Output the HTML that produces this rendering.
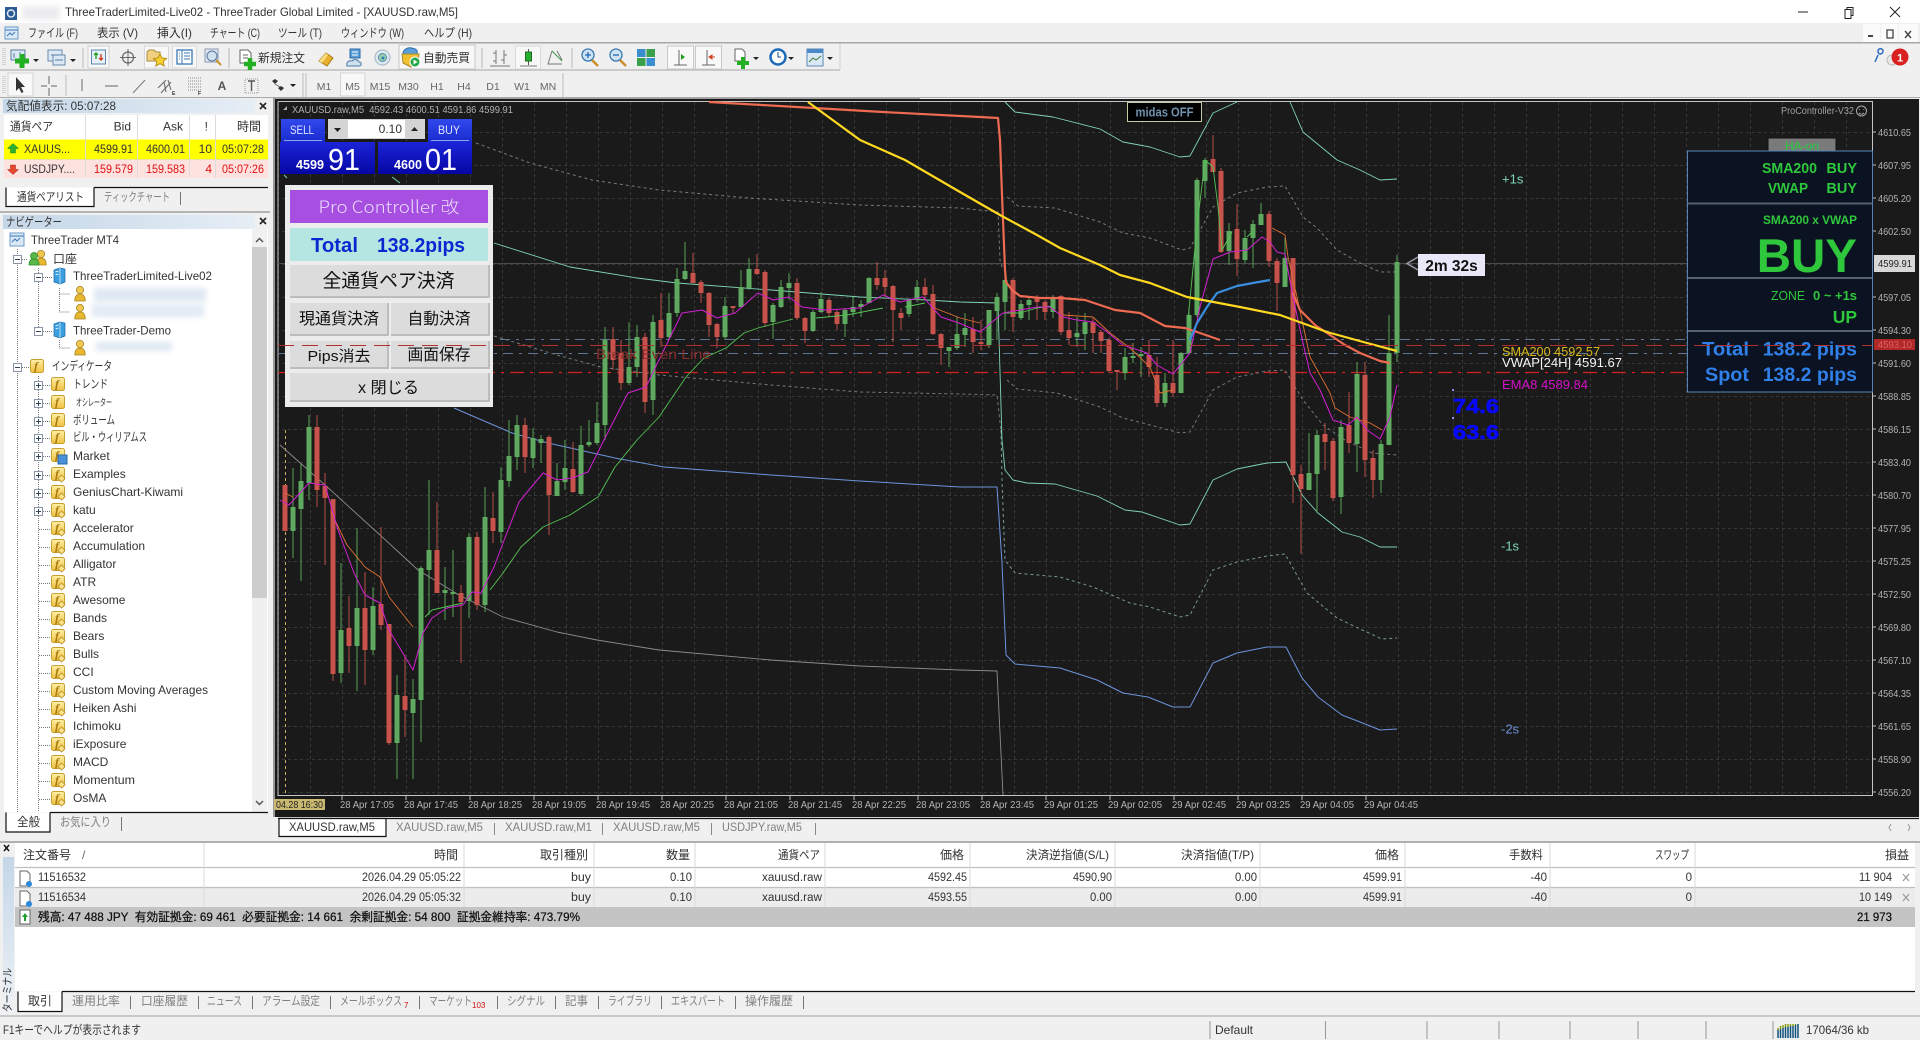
<!DOCTYPE html>
<html lang="ja"><head><meta charset="utf-8"><title>MT4</title>
<style>
html,body{margin:0;padding:0;background:#f0f0f0;overflow:hidden;width:1920px;height:1040px}
svg{display:block}
text{font-family:"Liberation Sans","Noto Sans CJK JP",sans-serif;font-size:12px;fill:#333;white-space:pre}
.e{text-anchor:end}.m{text-anchor:middle}
.g{fill:#808080}
.p text,.p{font-size:10.5px;fill:#b4b4b4}
.b{font-weight:700}
.gr{fill:#2fc73c;font-weight:700}
.f{font-family:"Liberation Serif",serif;font-style:italic;font-weight:700;font-size:12px;fill:#a87a10}
.btn{font-size:16px;fill:#111;text-anchor:middle}
</style></head><body>
<svg xmlns="http://www.w3.org/2000/svg" width="1920" height="1040" viewBox="0 0 1920 1040">
<defs>
<linearGradient id="hd" x1="0" x2="1"><stop offset="0" stop-color="#c4d6e8"/><stop offset="1" stop-color="#e6eef5"/></linearGradient>
<linearGradient id="bs" x1="0" x2="0" y1="0" y2="1"><stop offset="0" stop-color="#3048ec"/><stop offset="1" stop-color="#1a2cd0"/></linearGradient>
<linearGradient id="bp" x1="0" x2="0" y1="0" y2="1"><stop offset="0" stop-color="#1c24d8"/><stop offset="1" stop-color="#0606a4"/></linearGradient>
<linearGradient id="tb" x1="0" x2="0" y1="0" y2="1"><stop offset="0" stop-color="#c4d6e8"/><stop offset="1" stop-color="#eef2f6"/></linearGradient>
<linearGradient id="gold" x1="0" x2="0" y1="0" y2="1"><stop offset="0" stop-color="#fff0a8"/><stop offset="1" stop-color="#f0c040"/></linearGradient>
<pattern id="gv" x="310" y="0" width="32" height="6" patternUnits="userSpaceOnUse"><rect width="1" height="3" fill="#383838"/></pattern>
<pattern id="gh" x="0" y="132" width="6" height="33" patternUnits="userSpaceOnUse"><rect width="3" height="1" fill="#383838"/></pattern>
<filter id="bl" x="-20%" y="-60%" width="140%" height="220%"><feGaussianBlur stdDeviation="3"/></filter>
<g id="fi"><rect x=".5" y=".5" width="13" height="13" rx="2" fill="url(#gold)" stroke="#c8a030"/></g>
<g id="fd"><rect x=".5" y=".5" width="13" height="13" rx="2" fill="url(#gold)" stroke="#c8a030"/><path d="M10.5 8l3.5 3.5-3.5 3.5-3.5-3.500z" fill="#fbe38a" stroke="#b88a20" stroke-width=".8"/></g>
<g id="pm"><rect x=".5" y=".5" width="8" height="8" fill="#fff" stroke="#8a94a8"/><path d="M2 4.5h5" stroke="#345"/></g>
<g id="pp"><rect x=".5" y=".5" width="8" height="8" fill="#fff" stroke="#8a94a8"/><path d="M2 4.5h5M4.5 2v5" stroke="#345"/></g>
<g id="pe"><circle cx="6" cy="4" r="3.6" fill="#f0c850" stroke="#a88420" stroke-width=".8"/><path d="M.8 15c0-5 2-7 5.2-7s5.2 2 5.2 7z" fill="#e8b830" stroke="#a88420" stroke-width=".8"/></g>
<g id="sv"><path d="M1 2l6-2 5 1v13l-5 2-6-2z" fill="#3a9ee0" stroke="#1c6aa8" stroke-width=".7"/><path d="M7 0v16" stroke="#bde" stroke-width="1"/><path d="M2.500 4l3-1M2.500 7l3-1" stroke="#fff" stroke-width=".8"/></g>
</defs>

<rect width="1920" height="1040" fill="#f0f0f0"/>
<rect width="1920" height="23" fill="#fff"/>
<rect x="22" y="6" width="38" height="14" fill="#ececf0" filter="url(#bl)"/>
<rect x="5" y="7" width="12" height="13" fill="#2c5a94"/><circle cx="11" cy="13.500" r="3.500" fill="none" stroke="#dfe8f2" stroke-width="1.500"/>
<text x="65" y="16" textLength="393" lengthAdjust="spacingAndGlyphs">ThreeTraderLimited-Live02 - ThreeTrader Global Limited - [XAUUSD.raw,M5]</text>
<path d="M1798 12h10" stroke="#222" stroke-width="1"/>
<path d="M1845 9.500h6v9h-6zM1847 9.500v-2h6v8h-2" fill="none" stroke="#222"/>
<path d="M1890 7l10 10M1900 7l-10 10" stroke="#222" stroke-width="1"/>

<!-- menu -->
<rect x="5" y="27" width="13" height="12" fill="#dbe8f5" stroke="#6a9ac8"/><path d="M5 30h13M7 36l3-3 2 2 3-3" fill="none" stroke="#3a78b8"/>
<g font-size="12">
<text x="28" y="37" textLength="50" lengthAdjust="spacingAndGlyphs">ファイル (F)</text>
<text x="97" y="37" textLength="41" lengthAdjust="spacingAndGlyphs">表示 (V)</text>
<text x="157" y="37" textLength="35" lengthAdjust="spacingAndGlyphs">挿入(I)</text>
<text x="210" y="37" textLength="50" lengthAdjust="spacingAndGlyphs">チャート (C)</text>
<text x="278" y="37" textLength="44" lengthAdjust="spacingAndGlyphs">ツール (T)</text>
<text x="341" y="37" textLength="63" lengthAdjust="spacingAndGlyphs">ウィンドウ (W)</text>
<text x="424" y="37" textLength="48" lengthAdjust="spacingAndGlyphs">ヘルプ (H)</text>
</g>
<rect x="1863" y="24" width="17" height="19" fill="#fbfbfb"/><rect x="1881" y="24" width="17" height="19" fill="#fbfbfb"/><rect x="1899" y="24" width="19" height="19" fill="#fbfbfb"/>
<path d="M1868 36h5" stroke="#444" stroke-width="2"/><path d="M1887 30h6v8h-6z" fill="none" stroke="#444" stroke-width="1.300"/><path d="M1905 31l6 7M1911 31l-6 7" stroke="#444" stroke-width="1.400"/>
<rect y="42" width="1920" height="1.500" fill="#a8a8a8"/>
<path d="M0 70H840" stroke="#bdbdbd" stroke-width="1.500"/><path d="M840 44V70" stroke="#cfcfcf"/>

<!-- toolbar row 1 -->
<g fill="none" stroke-width="1">
<path d="M3 48v18M5 48v18M3 76v18M5 76v18" stroke="#c0c0c0" stroke-dasharray="1 1" stroke-width="1.200"/>
<rect x="11" y="50" width="14" height="10" fill="#dbe9f6" stroke="#5a7a9a"/><path d="M14 53v5M20 52v5" stroke="#5a7a9a"/>
<path d="M22 54v14M15 61h14" stroke="#22b022" stroke-width="5"/>
<path d="M33 59h6l-3 3z" fill="#222"/>
<rect x="48" y="50" width="14" height="11" fill="#dbe9f6" stroke="#6a8aaa"/><rect x="53" y="55" width="12" height="10" fill="#dbe9f6" stroke="#6a8aaa"/><path d="M51 55h8M55 60h8" stroke="#5a7a9a"/>
<path d="M70 59h6l-3 3z" fill="#222"/>
<path d="M83 48v20" stroke="#b8b8b8"/>
<rect x="88" y="46" width="21" height="22" fill="#f8f8f8" stroke="#d0d0d0"/><rect x="91.500" y="50" width="14" height="14" fill="#e8f0f8" stroke="#5a86b0"/><path d="M96 53v6M94 55l2-2 2 2" stroke="#22a022" stroke-width="1.400"/><path d="M101 54v6M99 58l2 2 2-2" stroke="#d04020" stroke-width="1.400"/>
<circle cx="128" cy="57.500" r="5.500" stroke="#666" stroke-width="1.200"/><path d="M128 49v17M120 57.500h16" stroke="#666"/>
<rect x="144.500" y="46" width="24" height="22" fill="#f8f8f8" stroke="#d8d8d8"/><path d="M147 52l2-2h5l2 2h4v9h-13z" fill="#f2d080" stroke="#a88a40"/><path d="M160 54l2 4 4.500.5-3.300 3 1 4.500-4.200-2.300-4.200 2.300 1-4.500-3.300-3 4.500-.5z" fill="#f8d030" stroke="#b89018"/>
<rect x="172.500" y="46" width="24" height="22" fill="#f8f8f8" stroke="#d8d8d8"/><rect x="177" y="50" width="15" height="14" fill="#fff" stroke="#3a78b8" stroke-width="1.300"/><path d="M182 50v14" stroke="#3a78b8"/><path d="M179 53h1M179 56h1M179 59h1M184 53h6M184 56h6M184 59h6" stroke="#3a78b8"/>
<rect x="205" y="49" width="13" height="13" fill="#e0e8f2" stroke="#8a9ab0"/><circle cx="212" cy="56" r="5" fill="#cfe0ef" stroke="#5a78a0"/><path d="M216 60l5 5" stroke="#c8902c" stroke-width="2"/>
<path d="M229 48v20" stroke="#b8b8b8"/>
<path d="M240 50h8l3 3v10h-11z" fill="#fff" stroke="#666"/><path d="M243 55h5M243 58h5" stroke="#666"/><path d="M250 58v12M244 64h12" stroke="#22b022" stroke-width="4.500"/>
<path d="M319 61l7-8 7 5-6 8z" fill="#e8b030" stroke="#a87a10"/><path d="M319 61l7-8 2 2-6 8z" fill="#f8dc80"/>
<path d="M350 49h10v9h-10z" fill="#5a9fd8" stroke="#2c6aa8"/><path d="M352 52h6M352 55h6" stroke="#fff"/><path d="M347 66c-1-4 2-6 5-5 1-2 6-2 7 1 3 0 3 4 0 4z" fill="#cfe0ef" stroke="#4a78a8"/>
<circle cx="382.500" cy="57.500" r="7.500" fill="#dfe7ef" stroke="#a0b4c4"/><circle cx="382.500" cy="57.500" r="4" fill="#9fd0a8" stroke="#5090b0"/><circle cx="383" cy="58" r="1.500" fill="#2a7ac0"/>
<rect x="399" y="45" width="76" height="24" fill="#f8f8f8" stroke="#c8c8c8"/><path d="M403 54c0-5 5-7 9-6s6 2 5 6z" fill="#5a9fd8" stroke="#2c6aa8"/><path d="M402 54h17l-1 9-7 4-8-4z" fill="#f0c030" stroke="#a88a30"/><circle cx="415" cy="62" r="5" fill="#22a848" stroke="#fff"/><path d="M413.500 59.500l4 2.500-4 2.500z" fill="#fff"/>
<path d="M482 48v20M572 48v20" stroke="#b8b8b8"/>
<path d="M496 50v14M493 53h3M496 61h-3M504 50v14M504 55h3M504 60h-3M490 66h20" stroke="#777"/>
<rect x="515.500" y="46" width="25" height="23" fill="#f8f8f8" stroke="#d8d8d8"/><path d="M528.500 49v16" stroke="#555"/><rect x="525.500" y="52" width="6" height="9" fill="#26b030" stroke="#226622"/><path d="M520 66h17" stroke="#777"/>
<path d="M552 51l-4 13h14M557 51l5 9" stroke="#777"/><path d="M552 51l5 5 5 5" stroke="#3a9a4a"/>
<circle cx="588" cy="55" r="6" fill="#cfe3f4" stroke="#3a78b0" stroke-width="1.300"/><path d="M585 55h6M588 52v6" stroke="#1a68b0" stroke-width="1.300"/><path d="M592 60l6 6" stroke="#c8902c" stroke-width="2.500"/>
<circle cx="616" cy="55" r="6" fill="#cfe3f4" stroke="#3a78b0" stroke-width="1.300"/><path d="M613 55h6" stroke="#1a68b0" stroke-width="1.300"/><path d="M620 60l6 6" stroke="#c8902c" stroke-width="2.500"/>
<rect x="637" y="49" width="8.500" height="8" fill="#3a8ed0"/><rect x="646.500" y="49" width="8.500" height="8" fill="#3aa04a"/><rect x="637" y="58" width="8.500" height="8" fill="#3aa04a"/><rect x="646.500" y="58" width="8.500" height="8" fill="#3a8ed0"/>
<rect x="667.500" y="46" width="26" height="23" fill="#f8f8f8" stroke="#c8c8c8"/><rect x="695.500" y="46" width="26" height="23" fill="#f8f8f8" stroke="#c8c8c8"/>
<path d="M679 50v15M674 65h13" stroke="#666"/><path d="M681 54l4 3-4 3z" fill="#22a022"/><path d="M707 50v15M702 65h13" stroke="#666"/><path d="M712 55l-3 2 3 2zM712 57h3" fill="#d04020" stroke="#d04020"/>
<path d="M735 49h7l3 3v9h-10z" fill="#fff" stroke="#666"/><path d="M743 57v12M737 63h12" stroke="#22b022" stroke-width="4"/><path d="M753 57h6l-3 3z" fill="#222"/>
<circle cx="778" cy="57" r="7.500" fill="#fff" stroke="#1c6ab8" stroke-width="2.500"/><path d="M778 52v5h3" stroke="#1c4a88"/><path d="M788 57h6l-3 3z" fill="#222"/>
<rect x="807" y="49" width="16" height="17" fill="#dbe9f6" stroke="#5a86b0"/><rect x="807" y="49" width="16" height="4" fill="#4a88c8"/><path d="M809 62l4-4 3 2 5-4" stroke="#3a7a3a"/><path d="M827 57h6l-3 3z" fill="#222"/>
<path d="M1878 51c0-3 5-3 5 0s-5 5-5 0zM1878 55l-3 7" stroke="#2a6ac0" stroke-width="1.500"/>
<circle cx="1892" cy="60" r="5" fill="#e8e8e8" stroke="#bbb"/><circle cx="1900" cy="57" r="8.500" fill="#d82020"/>
</g>
<text x="1900" y="61.500" class="m b" style="fill:#fff;font-size:11px">1</text>
<text x="258" y="62" textLength="47" lengthAdjust="spacingAndGlyphs" style="font-size:12px">新規注文</text>
<text x="423" y="62" textLength="47" lengthAdjust="spacingAndGlyphs" style="font-size:12px">自動売買</text>

<!-- toolbar row 2 -->
<g fill="none">
<rect x="8" y="73" width="25" height="23" fill="#f8f8f8" stroke="#d4d4d4"/>
<path d="M16 77v14l3-3 2.500 5 2-1-2.500-5h4z" fill="#333"/>
<path d="M49 76v8M49 88v8M41 86h6M51 86h6" stroke="#666"/>
<path d="M66 75v21M303 73v24M306 73v24M563 73v24" stroke="#bbb"/>
<path d="M82 79v12" stroke="#666"/><path d="M105 86h13" stroke="#666"/><path d="M133 93l12-13" stroke="#777"/>
<path d="M158 88l8-8M161 93l10-11M164 82l2 10M168 80l3 10" stroke="#666"/>
<path d="M188 78h13M188 81h13M188 84h13M188 87h13M188 90h13" stroke="#888" stroke-dasharray="1 1"/>
<rect x="245" y="79" width="13" height="14" stroke="#999" stroke-dasharray="1 1"/><path d="M248 81h7M251.500 81v10" stroke="#555" stroke-width="1.400"/>
<path d="M272 81l3-2 3 2-3 3zM278 88l3-2 3 2-3 3z" fill="#333"/><path d="M275 84l5 3" stroke="#666"/><path d="M290 84h6l-3 3z" fill="#222"/>
<rect x="340.500" y="73" width="24.500" height="23" fill="#f8f8f8" stroke="#d4d4d4"/>
</g>
<text x="222" y="90" class="m" style="font-size:12px;fill:#555;font-weight:700">A</text>
<text x="172" y="95" style="font-size:5px;font-weight:700">E</text><text x="198" y="95" style="font-size:5px;font-weight:700">F</text>
<text x="324" y="90" class="m" style="font-size:10.5px;fill:#666">M1</text>
<text x="352.500" y="90" class="m" style="font-size:10.500px;fill:#666">M5</text>
<text x="380" y="90" class="m" style="font-size:10.500px;fill:#666">M15</text>
<text x="408.500" y="90" class="m" style="font-size:10.500px;fill:#666">M30</text>
<text x="437" y="90" class="m" style="font-size:10.500px;fill:#666">H1</text>
<text x="464" y="90" class="m" style="font-size:10.500px;fill:#666">H4</text>
<text x="493" y="90" class="m" style="font-size:10.500px;fill:#666">D1</text>
<text x="522" y="90" class="m" style="font-size:10.500px;fill:#666">W1</text>
<text x="548" y="90" class="m" style="font-size:10.500px;fill:#666">MN</text>
<path d="M0 97.500H1920" stroke="#a8a8a8"/>

<!-- market watch -->
<rect x="3" y="98" width="265" height="112" fill="#f0f0f0"/>
<rect x="3" y="99" width="252" height="14" fill="url(#hd)"/>
<text x="6" y="110" textLength="110" lengthAdjust="spacingAndGlyphs" style="font-size:12px">気配値表示: 05:07:28</text>
<path d="M260 103l6 6M266 103l-6 6" stroke="#222" stroke-width="1.600"/>
<rect x="4" y="115" width="264" height="63" fill="#fff"/>
<rect x="4" y="139.500" width="264" height="20" fill="#ffff00"/>
<rect x="4" y="160" width="264" height="18" fill="#fde2e0"/>
<path d="M85.500 115V178M137.500 115V178M189.500 115V178M215.500 115V178" stroke="#dcdcdc"/>
<path d="M4 159.500H268" stroke="#e4e4a0"/>
<text x="10" y="130.500" textLength="43" lengthAdjust="spacingAndGlyphs">通貨ペア</text>
<text x="131" y="130.500" class="e">Bid</text><text x="183" y="130.500" class="e">Ask</text><text x="208" y="130.500" class="e">!</text>
<text x="261" y="130.500" class="e">時間</text>
<path d="M13 143.500l5.500 5h-3v4.500h-5V148.500h-3z" fill="#2eb030" stroke="#1a801a" stroke-width=".5"/>
<text x="24" y="153" textLength="46" lengthAdjust="spacingAndGlyphs">XAUUS...</text>
<text x="133" y="153" class="e" textLength="39" lengthAdjust="spacingAndGlyphs">4599.91</text><text x="185" y="153" class="e" textLength="39" lengthAdjust="spacingAndGlyphs">4600.01</text><text x="212" y="153" class="e">10</text><text x="264" y="153" class="e" textLength="42" lengthAdjust="spacingAndGlyphs">05:07:28</text>
<path d="M13 174.500l5.500-5h-3V165h-5v4.500h-3z" fill="#e84830" stroke="#a02010" stroke-width=".5"/>
<text x="24" y="173" textLength="51" lengthAdjust="spacingAndGlyphs">USDJPY....</text>
<text x="133" y="173" class="e" style="fill:#e01010" textLength="39" lengthAdjust="spacingAndGlyphs">159.579</text><text x="185" y="173" class="e" style="fill:#e01010" textLength="39" lengthAdjust="spacingAndGlyphs">159.583</text><text x="212" y="173" class="e" style="fill:#e01010">4</text><text x="264" y="173" class="e" style="fill:#e01010" textLength="42" lengthAdjust="spacingAndGlyphs">05:07:26</text>
<path d="M94 187.500H268" stroke="#111" stroke-width="1.200"/>
<path d="M6 187.500V206.500H94V187.500" fill="#fff" stroke="#111" stroke-width="1.200"/>
<text x="17" y="201" textLength="67" lengthAdjust="spacingAndGlyphs">通貨ペアリスト</text>
<text x="104" y="201" textLength="66" lengthAdjust="spacingAndGlyphs" class="g">ティックチャート</text>
<path d="M180.500 192V205" stroke="#777"/>
<path d="M0 212H270" stroke="#b4b4b4" stroke-width="2"/>

<!-- navigator -->
<rect x="3" y="215" width="252" height="14" fill="url(#hd)"/>
<text x="6" y="226" textLength="56" lengthAdjust="spacingAndGlyphs">ナビゲーター</text>
<path d="M260 218l6 6M266 218l-6 6" stroke="#222" stroke-width="1.600"/>
<rect x="4" y="229" width="264" height="583" fill="#fff"/>
<rect x="252" y="229" width="15" height="583" fill="#f0f0f0"/>
<rect x="252" y="247" width="15" height="351" fill="#cdcdcd"/>
<path d="M256 242l3.500-3.500 3.500 3.500M256 801l3.500 3.500 3.500-3.500" fill="none" stroke="#555" stroke-width="1.500"/>
<g fill="none" stroke="#777" stroke-dasharray="1 1">
<path d="M17.500 249V812M38.500 268V331M38.500 376V812M59.500 288V312H70M59.500 294H70M59.500 340V348H70"/>
<path d="M22 259.500H28M43 277.500H52M43 331.500H52M22 367.500H29M43 385.500H50M43 403.500H50M43 421.500H50M43 438.500H50M43 456.500H50M43 475.500H50M43 493.500H50M43 511.500H50M39 529.500H50M39 547.500H50M39 565.500H50M39 583.500H50M39 601.500H50M39 619.500H50M39 637.500H50M39 655.500H50M39 673.500H50M39 691.500H50M39 709.500H50M39 727.500H50M39 745.500H50M39 763.500H50M39 781.500H50M39 799.500H50"/>
</g>
<rect x="10" y="233" width="14" height="13" fill="#dbe9f6" stroke="#6a9ac8"/><path d="M10 236h14M12 242l3-3 2 2 3-3" fill="none" stroke="#3a78b8"/>
<text x="31" y="244" textLength="88" lengthAdjust="spacingAndGlyphs">ThreeTrader MT4</text>
<use href="#pm" x="13" y="255"/>
<use href="#pe" x="35" y="250"/><g transform="translate(29 252)"><circle cx="5" cy="4" r="3.500" fill="#58b848" stroke="#2a8a2a" stroke-width=".7"/><path d="M0 13c0-5 2-6 5-6s5 1 5 6z" fill="#58b848" stroke="#2a8a2a" stroke-width=".7"/></g>
<text x="53" y="263">口座</text>
<use href="#pm" x="34" y="273"/><use href="#sv" x="53" y="268"/>
<text x="73" y="280" textLength="139" lengthAdjust="spacingAndGlyphs">ThreeTraderLimited-Live02</text>
<use href="#pe" x="74" y="286"/><use href="#pe" x="74" y="304"/>
<rect x="94" y="288" width="112" height="14" fill="#dfe8f2" filter="url(#bl)"/><rect x="92" y="304" width="112" height="13" fill="#e2eaf4" filter="url(#bl)"/>
<use href="#pm" x="34" y="327"/><use href="#sv" x="53" y="322"/>
<text x="73" y="334.500" textLength="98" lengthAdjust="spacingAndGlyphs">ThreeTrader-Demo</text>
<use href="#pe" x="74" y="340"/>
<rect x="96" y="342" width="76" height="9" fill="#dfe8f2" filter="url(#bl)"/>
<use href="#pm" x="13" y="363"/>
<use href="#fi" x="30" y="359"/><text class="f" x="34" y="370">f</text>
<text x="52" y="370" textLength="60" lengthAdjust="spacingAndGlyphs">インディケータ</text>

<use href="#pp" x="34" y="381"/><use href="#fi" x="51" y="377"/><text class="f" x="55" y="388">f</text><text x="73" y="388" textLength="35" lengthAdjust="spacingAndGlyphs">トレンド</text>
<use href="#pp" x="34" y="399"/><use href="#fi" x="51" y="395"/><text class="f" x="55" y="406">f</text><text x="76" y="406" textLength="36" lengthAdjust="spacingAndGlyphs" style="font-size:10px">オシレーター</text>
<use href="#pp" x="34" y="417"/><use href="#fi" x="51" y="413"/><text class="f" x="55" y="424">f</text><text x="73" y="424" textLength="42" lengthAdjust="spacingAndGlyphs">ボリューム</text>
<use href="#pp" x="34" y="434"/><use href="#fi" x="51" y="430"/><text class="f" x="55" y="441">f</text><text x="73" y="441" textLength="74" lengthAdjust="spacingAndGlyphs">ビル・ウィリアムス</text>
<use href="#pp" x="34" y="452"/><use href="#fi" x="51" y="448"/><text class="f" x="55" y="459">f</text><rect x="58" y="455" width="9" height="9" fill="#4a90d8" stroke="#2a68a8"/><text x="73" y="460">Market</text>
<use href="#pp" x="34" y="471"/><use href="#fd" x="51" y="467"/><text class="f" x="55" y="478">f</text><text x="73" y="478">Examples</text>
<use href="#pp" x="34" y="489"/><use href="#fd" x="51" y="485"/><text class="f" x="55" y="496">f</text><text x="73" y="496">GeniusChart-Kiwami</text>
<use href="#pp" x="34" y="507"/><use href="#fd" x="51" y="503"/><text class="f" x="55" y="514">f</text><text x="73" y="514">katu</text>
<use href="#fd" x="51" y="521"/><text class="f" x="55" y="532">f</text><text x="73" y="532">Accelerator</text>
<use href="#fd" x="51" y="539"/><text class="f" x="55" y="550">f</text><text x="73" y="550">Accumulation</text>
<use href="#fd" x="51" y="557"/><text class="f" x="55" y="568">f</text><text x="73" y="568">Alligator</text>
<use href="#fd" x="51" y="575"/><text class="f" x="55" y="586">f</text><text x="73" y="586">ATR</text>
<use href="#fd" x="51" y="593"/><text class="f" x="55" y="604">f</text><text x="73" y="604">Awesome</text>
<use href="#fd" x="51" y="611"/><text class="f" x="55" y="622">f</text><text x="73" y="622">Bands</text>
<use href="#fd" x="51" y="629"/><text class="f" x="55" y="640">f</text><text x="73" y="640">Bears</text>
<use href="#fd" x="51" y="647"/><text class="f" x="55" y="658">f</text><text x="73" y="658">Bulls</text>
<use href="#fd" x="51" y="665"/><text class="f" x="55" y="676">f</text><text x="73" y="676">CCI</text>
<use href="#fd" x="51" y="683"/><text class="f" x="55" y="694">f</text><text x="73" y="694" textLength="135" lengthAdjust="spacingAndGlyphs">Custom Moving Averages</text>
<use href="#fd" x="51" y="701"/><text class="f" x="55" y="712">f</text><text x="73" y="712">Heiken Ashi</text>
<use href="#fd" x="51" y="719"/><text class="f" x="55" y="730">f</text><text x="73" y="730">Ichimoku</text>
<use href="#fd" x="51" y="737"/><text class="f" x="55" y="748">f</text><text x="73" y="748">iExposure</text>
<use href="#fd" x="51" y="755"/><text class="f" x="55" y="766">f</text><text x="73" y="766">MACD</text>
<use href="#fd" x="51" y="773"/><text class="f" x="55" y="784">f</text><text x="73" y="784" textLength="62" lengthAdjust="spacingAndGlyphs">Momentum</text>
<use href="#fd" x="51" y="791"/><text class="f" x="55" y="802">f</text><text x="73" y="802">OsMA</text>
<rect x="3" y="812" width="267" height="30" fill="#f0f0f0"/>
<path d="M50 812.500H268" stroke="#111" stroke-width="1.200"/>
<path d="M6 812.500V832H50V812.500" fill="#fff" stroke="#111" stroke-width="1.200"/>
<text x="17" y="826" textLength="23" lengthAdjust="spacingAndGlyphs">全般</text>
<text x="60" y="826" textLength="51" lengthAdjust="spacingAndGlyphs" class="g">お気に入り</text>
<path d="M121.500 817V831" stroke="#777"/>

<!-- chart -->
<rect x="273" y="98" width="647" height="2" fill="#a0a0a0"/>
<rect x="273" y="98" width="2" height="720" fill="#999"/>
<rect x="275" y="99" width="1644" height="718" fill="#1a1a1a"/>
<rect x="278" y="102" width="1594" height="693" fill="url(#gv)"/>
<rect x="278" y="102" width="1594" height="693" fill="url(#gh)"/>
<path d="M278 101.500H1872.500V795.500H278V101.500" fill="none" stroke="#c4c4c4"/>
<path d="M1873 132h3M1873 165h3M1873 198h3M1873 231h3M1873 297h3M1873 330h3M1873 363h3M1873 396h3M1873 429h3M1873 462h3M1873 495h3M1873 528h3M1873 561h3M1873 594h3M1873 627h3M1873 660h3M1873 693h3M1873 726h3M1873 759h3M1873 792h3" stroke="#bbb"/>
<path d="M342 795v5M406 795v5M470 795v5M534 795v5M598 795v5M662 795v5M726 795v5M790 795v5M854 795v5M918 795v5M982 795v5M1046 795v5M1110 795v5M1174 795v5M1238 795v5M1302 795v5M1366 795v5" stroke="#bbb"/>
<path d="M285.500 430V795" stroke="#c8b15a" stroke-dasharray="3 3"/>
<path d="M278 263.500H1872" stroke="#4c4c4c"/>
<path d="M500 339.500H1872" stroke="#5c7694" stroke-dasharray="10 6 3 6"/>
<path d="M278 353.500H1872" stroke="#5c7694" stroke-dasharray="10 6 3 6"/>
<path d="M278 372.500H1872" stroke="#d42020" stroke-dasharray="14 6 3 6" stroke-width="1.200"/>

<!-- indicator lines -->
<g fill="none" stroke-linejoin="round">
<path d="M476 143L530 163 592 180 659 190 749 198 860 205 960 208 998 212 1000 260 1003 270M1007 197L1018 206 1055 208 1100 222 1123 233 1150 238 1182 250 1190 248 1213 207 1237 193 1267 187 1285 186 1303 217 1317 228 1337 250 1360 263 1380 272 1397 272" stroke="#7a7a7a" stroke-dasharray="3 3"/>
<path d="M494 336L557 355 601 367 659 375 771 385 860 392 960 394 997 395 1002 440M1007 380L1017 389 1057 393 1100 407 1123 418 1150 425 1180 433 1190 432 1213 390 1237 377 1267 371 1285 370 1303 400 1323 425 1345 440 1372 453 1397 455" stroke="#707a76" stroke-dasharray="3 3"/>
<path d="M1001 430L1002 480 1005 560 1015 573 1060 577 1093 587 1130 603 1150 607 1180 617 1190 615 1213 570 1237 562 1267 556 1285 554 1307 593 1337 618 1360 629 1382 639 1397 638" stroke="#789a8e" stroke-dasharray="3 3"/>
<path d="M494 243L570 267 637 278 677 283 771 290 860 297 927 300 960 302 998 303 1002 440 1005 470 1013 480 1027 483 1055 484 1097 496 1125 510 1142 512 1180 525 1190 524 1213 480 1237 469 1267 463 1286 462 1302 495 1318 513 1342 532 1360 537 1380 547 1397 547" stroke="#7fd6b4" stroke-width=".9"/>
<path d="M1005 102L1015 112 1053 117 1100 129 1123 142 1150 147 1180 157 1190 156 1213 113 1237 102M1290 102L1303 132 1337 160 1360 170 1380 180 1397 179M287 178L284 175M392 177L400 183" stroke="#7fd6b4" stroke-width=".9"/>
<path d="M454 408L512 433 548 443 615 458 664 467 771 475 860 481 960 487 997 487 1002 563 1006 655 1015 664 1060 668 1097 680 1123 693 1148 697 1173 707 1190 707 1213 663 1237 653 1267 647 1286 647 1302 678 1318 697 1342 715 1360 722 1380 730 1397 729" stroke="#6d94dc"/>
<path d="M280 445L325 485 380 535 418 570 459 595 503 617 557 632 597 640 659 650 771 660 860 666 960 670 997 671 1003 795" stroke="#8c8c8c" stroke-width=".9"/>
</g>

<!-- candles: wicks -->
<path fill="none" stroke="#58a458" stroke-width="1" d="M293 468V558M301 463V581M309 415V500M341 563V683M357 528V691M373 587V655M397 675V779M413 679V779M421 566V742M429 480V615M445 567V620M453 550V617M469 533V618M485 487V612M501 467V543M509 420V487M517 415V470M533 428V468M541 435V463M557 463V496M565 440V490M581 426V496M589 420V447M597 402V445M605 327V440M629 322V385M637 325V377M653 315V415M669 293V340M677 268V317M685 242V280M725 297V340M741 270V308M749 258V290M773 303V339M781 280V308M789 273V300M813 310V332M821 292V313M845 308V337M853 297V317M861 300V317M869 277V303M909 300V317M917 280V302M949 347V367M957 317V350M965 313V347M989 310V348M997 293V340M1005 260V330M1021 300V320M1029 297V320M1053 295V318M1077 317V347M1085 313V350M1125 348V380M1133 343V363M1141 347V377M1165 373V407M1181 352V393M1189 307V355M1197 178V317M1205 158V198M1229 223V265M1245 230V263M1253 220V268M1261 203V225M1285 238V287M1309 433V490M1317 430V513M1341 420V514M1357 362V472M1381 440V493M1389 315V445M1397 255V362"/>
<path fill="none" stroke="#b8504a" stroke-width="1" d="M325 473V565M333 499V681M349 596V673M365 572V685M381 527V630M389 624V745M405 655V737M437 502V593M461 585V663M477 532V610M493 492V543M525 418V473M549 435V535M573 442V493M613 327V370M621 340V390M645 333V413M661 293V347M693 253V283M701 280V303M709 292V337M717 323V348M733 306V313M757 254V275M765 270V327M797 278V320M805 317V343M829 298V317M837 310V330M877 262V290M885 270V297M893 285V342M901 308V330M925 278V300M933 285V335M941 333V365M973 317V353M981 320V350M1013 278V332M1037 295V320M1045 300V320M1061 295V335M1069 312V345M1093 318V353M1101 330V353M1109 338V373M1117 370V390M1149 340V377M1157 357V407M1173 340V397M1213 135V172M1221 168V253M1237 204V276M1269 211V267M1277 258V311M1293 258V503M1301 465V554M1325 423V470M1333 438V501M1349 392V453M1365 362V477M1373 450V498M317 415V507"/>
<!-- candles: bodies -->
<path fill="none" stroke="#5eaa5e" stroke-width="5" d="M293 507V531M301 481V509M309 427V483M341 630V673M357 608V646M373 606V650M397 695V743M413 699V713M421 568V700M429 550V570M445 590V593M453 592V594M469 537V601M485 517V605M501 480V532M509 456V481M517 425V457M533 438V458M541 439V443M557 481V496M565 468V482M581 445V494M589 442V445M597 423V443M605 340V425M629 367V383M637 337V367M653 322V400M669 313V337M677 279V313M685 271V279M725 306V337M741 287V307M749 269V288M773 305V322M781 287V307M789 283V288M813 312V331M821 299V312M845 310V324M853 307V312M861 304V307M869 278V303M909 300V314M917 287V300M949 347V351M957 334V348M965 328V335M989 310V345M997 297V311M1005 280V302M1021 304V318M1029 300V305M1053 297V312M1077 333V337M1085 322V334M1125 357V373M1133 356V358M1141 354V356M1165 383V403M1181 353V393M1189 315V353M1197 180V315M1205 160V181M1229 231V251M1245 238V260M1253 224V238M1261 214V225M1285 258V287M1309 473V490M1317 435V474M1341 427V497M1357 374V444M1381 444V480M1389 353V445M1397 262V353"/>
<path fill="none" stroke="#c8524c" stroke-width="5" d="M285 485V531M317 427V490M325 486V498M333 499V674M349 628V646M365 608V650M381 604V625M389 624V743M405 696V710M437 550V593M461 593V602M477 537V605M493 518V531M525 425V457M549 437V495M573 469V492M613 339V360M621 353V383M645 337V402M661 320V338M693 273V283M701 282V293M709 293V325M717 324V337M733 306V308M757 269V274M765 272V323M797 283V318M805 318V331M829 300V313M837 312V324M877 278V285M885 278V287M893 286V310M901 313V318M925 287V295M933 294V334M941 334V348M973 329V342M981 342V344M1013 280V317M1037 298V302M1045 302V312M1061 296V332M1069 330V338M1093 322V333M1101 332V341M1109 340V371M1117 370V372M1149 355V367M1157 375V403M1173 383V393M1213 159V172M1221 171V252M1237 229V259M1269 214V261M1277 261V283M1293 258V475M1301 474V489M1325 434V442M1333 441V498M1349 425V443M1365 375V460M1373 458V480"/>

<g fill="none" stroke-linejoin="round">
<path d="M425 617L432 610 454 605 463 603M490 590L503 573 521 547 543 527 570 515 598 497 615 467 637 440 659 417 686 377 704 358 726 348 744 333 758 328 793 319M816 318L847 315 883 308M905 307L925 303M1003 313L1020 313 1037 308 1053 306M1188 320L1197 227 1205 160 1213 167 1218 207 1222 250 1232 232M1247 237L1252 232" stroke="#54c454" stroke-width=".9"/>
<path d="M285 493L293 497M331 512L347 545 365 567 380 577 389 597 413 627M932 307L960 318 980 323M1063 315L1093 317 1110 333 1130 348 1150 367 1160 393 1173 390M1272 228L1285 235 1288 257 1297 297 1310 357 1330 393 1335 408 1350 417 1370 423 1382 430" stroke="#e07030" stroke-width=".9"/>
<path d="M280 500L289 505 309 483 325 485 338 530 354 573 365 595 380 603 389 630 413 670 423 633 432 618 447 608 463 605 472 592 481 593 494 567 503 543 519 502 543 473 557 480 572 478 588 472 604 440 628 393 646 387 659 360 682 313 702 310 717 318 735 313 758 293 773 300 789 297 802 307 825 310 860 308 883 295 900 302 923 297 941 317 959 323 980 332 1003 313 1037 307 1050 307 1063 317 1077 320 1093 322 1107 332 1123 345 1147 353 1157 365 1173 374 1190 353 1200 307 1213 259 1230 252 1247 250 1262 237 1270 242 1277 252 1285 254 1293 297 1303 343 1310 373 1320 390 1333 420 1348 425 1357 417 1367 430 1380 439 1390 417 1397 385" stroke="#d420d4"/>
<path d="M709 102L762 105 883 112 980 117 998 118 1000 140 1002 195 1005 270 1006 282 1012 290 1020 296 1040 298 1060 298 1085 300 1100 305 1115 310 1140 313 1165 326 1185 328 1200 333 1220 340M1293 293L1300 310 1315 325 1330 335 1345 345 1360 353 1380 361 1390 363" stroke="#ee6a50" stroke-width="2.200"/>
<path d="M1190 340L1197 323 1207 307 1217 293 1237 286 1253 283 1270 280" stroke="#3a8ee0" stroke-width="2.200"/>
<path d="M808 102L860 140 905 160 960 192 1000 215 1037 235 1060 248 1100 265 1120 275 1150 283 1187 297 1240 307 1280 315 1327 332 1367 343 1397 351" stroke="#ffd820" stroke-width="2.200"/>
</g>

<!-- chart labels -->
<path d="M283 110l4-4v4z" fill="#aaa"/>
<text x="292" y="113" textLength="221" lengthAdjust="spacingAndGlyphs" style="font-size:10.500px;fill:#b0b0b0">XAUUSD.raw,M5  4592.43 4600.51 4591.86 4599.91</text>
<text x="596" y="359" textLength="115" lengthAdjust="spacingAndGlyphs" style="font-size:14px;fill:#8a2c2c">Break Even Line</text>
<rect x="1127.500" y="102.500" width="74" height="19" fill="#000" stroke="#c8c8a0"/>
<text x="1164.500" y="116.500" class="m" style="font-size:13px;fill:#6f92ae;font-weight:700" textLength="58" lengthAdjust="spacingAndGlyphs">midas OFF</text>
<text x="1781" y="114" textLength="73" lengthAdjust="spacingAndGlyphs" style="font-size:10.500px;fill:#a0a0a0">ProController-V32</text>
<circle cx="1861.500" cy="111" r="5" fill="none" stroke="#a8a8a8"/><path d="M1859 109.500h.8M1863.500 109.500h.8M1859 113c1.500 1.500 3.500 1.500 5 0" stroke="#a8a8a8" fill="none"/>
<text x="1502" y="183.500" style="font-size:13px;fill:#7fd6b4">+1s</text>
<text x="1501" y="550.500" style="font-size:13px;fill:#7fd6b4">-1s</text>
<text x="1501" y="733.500" style="font-size:13px;fill:#6d94dc">-2s</text>
<path d="M1418 257l-11 6.500 11 6.500" fill="none" stroke="#9898a8" stroke-width="1.500"/>
<rect x="1418" y="254" width="67" height="22" fill="#e8e8f8"/>
<text x="1451.500" y="271" class="m b" style="font-size:15.500px;fill:#111">2m 32s</text>
<text x="1502" y="356" textLength="98" lengthAdjust="spacingAndGlyphs" style="font-size:13px;fill:#d8b818">SMA200 4592.57</text>
<text x="1502" y="367" textLength="120" lengthAdjust="spacingAndGlyphs" style="font-size:13px;fill:#f4f4f4">VWAP[24H] 4591.67</text>
<text x="1502" y="389" textLength="86" lengthAdjust="spacingAndGlyphs" style="font-size:13px;fill:#d410c8">EMA8 4589.84</text>
<rect x="1453.500" y="391.500" width="46" height="48" fill="none" stroke="#2a2a2a"/>
<rect x="1452" y="389" width="2" height="2" fill="#88f"/><rect x="1452" y="417" width="2" height="2" fill="#88f"/>
<text x="1453" y="413" textLength="46" lengthAdjust="spacingAndGlyphs" class="b" style="font-size:20px;fill:#0808ff;stroke:#0808ff;stroke-width:.6">74.6</text>
<text x="1453" y="439" textLength="46" lengthAdjust="spacingAndGlyphs" class="b" style="font-size:20px;fill:#0808ff;stroke:#0808ff;stroke-width:.6">63.6</text>
<rect x="1768" y="138" width="68" height="13" fill="#7a7a7a" stroke="#111"/>
<text x="1802" y="150" class="m" style="font-size:12px;fill:#22d040">HA-on</text>

<!-- right info panel -->
<rect x="1687.500" y="151" width="185" height="241" fill="#0b1222" stroke="#5585b5"/>
<path d="M1688 203.500H1872M1688 278H1872M1688 331H1872" stroke="#556070" stroke-width="2"/>
<text x="1762" y="173" textLength="55" lengthAdjust="spacingAndGlyphs" class="gr" style="font-size:14.500px">SMA200</text>
<text x="1857" y="173" class="e gr" style="font-size:14.500px">BUY</text>
<text x="1768" y="193" textLength="40" lengthAdjust="spacingAndGlyphs" class="gr" style="font-size:14.500px">VWAP</text>
<text x="1857" y="193" class="e gr" style="font-size:14.500px">BUY</text>
<text x="1857" y="224" class="e gr" style="font-size:12px" textLength="94" lengthAdjust="spacingAndGlyphs">SMA200 x VWAP</text>
<text x="1857" y="272" class="e gr" style="font-size:47.500px">BUY</text>
<text x="1771" y="300" textLength="34" lengthAdjust="spacingAndGlyphs" style="font-size:13px;fill:#2fc73c">ZONE</text>
<text x="1857" y="300" class="e" textLength="44" lengthAdjust="spacingAndGlyphs" style="font-size:13px;fill:#2fc73c;font-weight:700">0 ~ +1s</text>
<text x="1857" y="323" class="e gr" style="font-size:17.500px">UP</text>
<text x="1702" y="355.500" textLength="47" lengthAdjust="spacingAndGlyphs" style="font-size:19.500px;fill:#2f80e8;font-weight:700">Total</text>
<text x="1857" y="355.500" class="e" style="font-size:19.500px;fill:#2f80e8;font-weight:700">138.2 pips</text>
<text x="1705" y="381" textLength="44" lengthAdjust="spacingAndGlyphs" style="font-size:19.500px;fill:#2f80e8;font-weight:700">Spot</text>
<text x="1857" y="381" class="e" style="font-size:19.500px;fill:#2f80e8;font-weight:700">138.2 pips</text>
<rect x="1874" y="254" width="45" height="18" fill="#1a1a1a"/>
<rect x="1874" y="255" width="41" height="17" fill="#d8d8d8"/>
<text x="1878" y="267" textLength="34" lengthAdjust="spacingAndGlyphs" style="font-size:10.500px;fill:#222">4599.91</text>
<rect x="1874" y="339" width="41" height="11" fill="#b02828"/>
<text x="1878" y="348" textLength="34" lengthAdjust="spacingAndGlyphs" style="font-size:10.500px;fill:#e06060">4593.10</text>
<g class="p">
<text x="1878" y="136" textLength="33" lengthAdjust="spacingAndGlyphs">4610.65</text><text x="1878" y="169" textLength="33" lengthAdjust="spacingAndGlyphs">4607.95</text><text x="1878" y="202" textLength="33" lengthAdjust="spacingAndGlyphs">4605.20</text><text x="1878" y="235" textLength="33" lengthAdjust="spacingAndGlyphs">4602.50</text><text x="1878" y="301" textLength="33" lengthAdjust="spacingAndGlyphs">4597.05</text><text x="1878" y="334" textLength="33" lengthAdjust="spacingAndGlyphs">4594.30</text><text x="1878" y="367" textLength="33" lengthAdjust="spacingAndGlyphs">4591.60</text><text x="1878" y="400" textLength="33" lengthAdjust="spacingAndGlyphs">4588.85</text><text x="1878" y="433" textLength="33" lengthAdjust="spacingAndGlyphs">4586.15</text><text x="1878" y="466" textLength="33" lengthAdjust="spacingAndGlyphs">4583.40</text><text x="1878" y="499" textLength="33" lengthAdjust="spacingAndGlyphs">4580.70</text><text x="1878" y="532" textLength="33" lengthAdjust="spacingAndGlyphs">4577.95</text><text x="1878" y="565" textLength="33" lengthAdjust="spacingAndGlyphs">4575.25</text><text x="1878" y="598" textLength="33" lengthAdjust="spacingAndGlyphs">4572.50</text><text x="1878" y="631" textLength="33" lengthAdjust="spacingAndGlyphs">4569.80</text><text x="1878" y="664" textLength="33" lengthAdjust="spacingAndGlyphs">4567.10</text><text x="1878" y="697" textLength="33" lengthAdjust="spacingAndGlyphs">4564.35</text><text x="1878" y="730" textLength="33" lengthAdjust="spacingAndGlyphs">4561.65</text><text x="1878" y="763" textLength="33" lengthAdjust="spacingAndGlyphs">4558.90</text><text x="1878" y="796" textLength="33" lengthAdjust="spacingAndGlyphs">4556.20</text>
<text x="340" y="808" textLength="54" lengthAdjust="spacingAndGlyphs">28 Apr 17:05</text><text x="404" y="808" textLength="54" lengthAdjust="spacingAndGlyphs">28 Apr 17:45</text><text x="468" y="808" textLength="54" lengthAdjust="spacingAndGlyphs">28 Apr 18:25</text><text x="532" y="808" textLength="54" lengthAdjust="spacingAndGlyphs">28 Apr 19:05</text><text x="596" y="808" textLength="54" lengthAdjust="spacingAndGlyphs">28 Apr 19:45</text><text x="660" y="808" textLength="54" lengthAdjust="spacingAndGlyphs">28 Apr 20:25</text><text x="724" y="808" textLength="54" lengthAdjust="spacingAndGlyphs">28 Apr 21:05</text><text x="788" y="808" textLength="54" lengthAdjust="spacingAndGlyphs">28 Apr 21:45</text><text x="852" y="808" textLength="54" lengthAdjust="spacingAndGlyphs">28 Apr 22:25</text><text x="916" y="808" textLength="54" lengthAdjust="spacingAndGlyphs">28 Apr 23:05</text><text x="980" y="808" textLength="54" lengthAdjust="spacingAndGlyphs">28 Apr 23:45</text><text x="1044" y="808" textLength="54" lengthAdjust="spacingAndGlyphs">29 Apr 01:25</text><text x="1108" y="808" textLength="54" lengthAdjust="spacingAndGlyphs">29 Apr 02:05</text><text x="1172" y="808" textLength="54" lengthAdjust="spacingAndGlyphs">29 Apr 02:45</text><text x="1236" y="808" textLength="54" lengthAdjust="spacingAndGlyphs">29 Apr 03:25</text><text x="1300" y="808" textLength="54" lengthAdjust="spacingAndGlyphs">29 Apr 04:05</text><text x="1364" y="808" textLength="54" lengthAdjust="spacingAndGlyphs">29 Apr 04:45</text>
</g>
<rect x="274" y="799" width="51" height="11" fill="#c8b870"/>
<text x="276" y="808" textLength="47" lengthAdjust="spacingAndGlyphs" style="font-size:10.500px;fill:#222">04.28 16:30</text>

<!-- one-click panel -->
<rect x="281" y="119" width="44" height="23" fill="url(#bs)"/>
<rect x="428" y="119" width="44" height="23" fill="url(#bs)"/>
<path d="M284 140.500H322M431 140.500H469" stroke="#8ea0e8"/>
<text x="290" y="134" textLength="24" lengthAdjust="spacingAndGlyphs" style="font-size:12px;fill:#dfe4ff">SELL</text>
<text x="438" y="134" textLength="22" lengthAdjust="spacingAndGlyphs" style="font-size:12px;fill:#dfe4ff">BUY</text>
<rect x="328" y="119" width="97" height="20" fill="#d4d4d4"/>
<rect x="348" y="120" width="57" height="18" fill="#fff"/>
<path d="M334 128h7l-3.500 4zM411 131h7l-3.500-4z" fill="#222"/>
<text x="402" y="133" class="e" style="font-size:12px;fill:#333">0.10</text>
<rect x="280" y="142" width="95" height="32" fill="url(#bp)"/><rect x="378" y="142" width="94" height="32" fill="url(#bp)"/>
<text x="296" y="169" textLength="28" lengthAdjust="spacingAndGlyphs" class="b" style="font-size:12.500px;fill:#fff">4599</text>
<text x="328" y="170" textLength="32" lengthAdjust="spacingAndGlyphs" style="font-size:31px;fill:#fff">91</text>
<text x="394" y="169" textLength="28" lengthAdjust="spacingAndGlyphs" class="b" style="font-size:12.500px;fill:#fff">4600</text>
<text x="425" y="170" textLength="32" lengthAdjust="spacingAndGlyphs" style="font-size:31px;fill:#fff">01</text>

<!-- pro controller -->
<rect x="285" y="185" width="208" height="222" fill="#ececec"/>
<rect x="290" y="190" width="198" height="33" fill="#a64fe0"/>
<text x="389" y="213" class="m" textLength="141" lengthAdjust="spacingAndGlyphs" style="font-family:'Noto Sans CJK JP',sans-serif;font-size:17px;fill:#eadcff;font-weight:200">Pro Controller 改</text>
<rect x="290" y="228" width="198" height="33" fill="#b6e6e2"/>
<text x="311" y="252" textLength="47" lengthAdjust="spacingAndGlyphs" class="b" style="font-size:20px;fill:#0a28d0">Total</text>
<text x="377" y="252" textLength="88" lengthAdjust="spacingAndGlyphs" class="b" style="font-size:20px;fill:#0a28d0">138.2pips</text>
<g fill="#dcdcdc" stroke="none">
<rect x="290" y="265" width="199" height="33"/><rect x="290" y="303" width="98" height="33"/><rect x="391" y="303" width="98" height="33"/><rect x="290" y="341" width="98" height="28"/><rect x="391" y="341" width="98" height="28"/><rect x="290" y="373" width="199" height="29"/>
</g>
<path d="M290 297H489M290 335H388M391 335H489M290 368H388M391 368H489M290 401H489M489 265V298M388 303V336M489 303V336M388 341V369M489 341V369M489 373V402" fill="none" stroke="#bcbcbc" stroke-width="2"/>
<text x="388.500" y="287" class="m" textLength="132" lengthAdjust="spacingAndGlyphs" style="font-size:19px;fill:#111">全通貨ペア決済</text>
<text x="339" y="324" class="btn" textLength="80" lengthAdjust="spacingAndGlyphs" style="font-size:16px">現通貨決済</text>
<text x="439" y="324" class="btn" textLength="63" lengthAdjust="spacingAndGlyphs" style="font-size:16px">自動決済</text>
<text x="339" y="361" class="btn" textLength="63" lengthAdjust="spacingAndGlyphs" style="font-size:15px">Pips消去</text>
<text x="439" y="360" class="btn" textLength="63" lengthAdjust="spacingAndGlyphs" style="font-size:16px">画面保存</text>
<text x="388.500" y="393" class="btn" textLength="61" lengthAdjust="spacingAndGlyphs" style="font-size:16px">x 閉じる</text>
<path d="M278 345.500H1872" stroke="#b03030" stroke-dasharray="16 8"/>

<!-- chart tabs -->
<rect x="273" y="817" width="1647" height="25" fill="#f0f0f0"/>
<path d="M278 818.500H1919" stroke="#111" stroke-width="1.300"/>
<path d="M279 818.500V836.500H386V818.500z" fill="#fff" stroke="#111" stroke-width="1.200"/>
<text x="289" y="831" textLength="86" lengthAdjust="spacingAndGlyphs">XAUUSD.raw,M5</text>
<text x="396" y="831" textLength="87" lengthAdjust="spacingAndGlyphs" class="g">XAUUSD.raw,M5</text>
<text x="505" y="831" textLength="87" lengthAdjust="spacingAndGlyphs" class="g">XAUUSD.raw,M1</text>
<text x="613" y="831" textLength="87" lengthAdjust="spacingAndGlyphs" class="g">XAUUSD.raw,M5</text>
<text x="722" y="831" textLength="80" lengthAdjust="spacingAndGlyphs" class="g">USDJPY.raw,M5</text>
<path d="M494.500 823V835M602.500 823V835M711.500 823V835M815.500 823V835" stroke="#888"/>
<path d="M1891 824l-2 3.500 2 3.500M1908 824l2 3.500-2 3.500" fill="none" stroke="#999"/>

<!-- terminal -->
<path d="M0 842H1920" stroke="#b0b0b0" stroke-width="2"/>
<rect x="15" y="843" width="1900" height="148" fill="#fff"/>
<path d="M4 845l5 6M9 845l-5 6" stroke="#111" stroke-width="1.500"/>
<rect x="3" y="857" width="11" height="156" fill="url(#tb)"/>
<text transform="translate(11 1012) rotate(-90)" textLength="44" lengthAdjust="spacingAndGlyphs" style="font-size:11px">ターミナル</text>
<rect x="15" y="888" width="1900" height="19" fill="#ececec"/>
<rect x="15" y="907" width="1900" height="20" fill="#c4c4c4"/>
<path d="M15 867.500H1915M15 887.500H1915" stroke="#c0c0c0" stroke-width="1.300"/>
<path d="M204 843V907M464 843V907M594 843V907M695 843V907M825 843V907M970 843V907M1115 843V907M1260 843V907M1405 843V907M1550 843V907M1695 843V907" stroke="#dadada"/>
<text x="23" y="859">注文番号</text><text x="82" y="859" style="fill:#666">/</text>
<text x="458" y="859" class="e">時間</text><text x="588" y="859" class="e">取引種別</text><text x="690" y="859" class="e">数量</text>
<text x="820" y="859" class="e" textLength="42" lengthAdjust="spacingAndGlyphs">通貨ペア</text><text x="964" y="859" class="e">価格</text>
<text x="1109" y="859" class="e" textLength="83" lengthAdjust="spacingAndGlyphs">決済逆指値(S/L)</text>
<text x="1254" y="859" class="e" textLength="73" lengthAdjust="spacingAndGlyphs">決済指値(T/P)</text>
<text x="1399" y="859" class="e">価格</text><text x="1543" y="859" class="e" textLength="34" lengthAdjust="spacingAndGlyphs">手数料</text>
<text x="1689" y="859" class="e" textLength="34" lengthAdjust="spacingAndGlyphs">スワップ</text><text x="1909" y="859" class="e">損益</text>

<path d="M20 871h7l3 3v12H20z" fill="#fff" stroke="#666"/><circle cx="29" cy="884" r="3" fill="#2a88d8"/>
<path d="M20 891h7l3 3v12H20z" fill="#fff" stroke="#666"/><circle cx="29" cy="904" r="3" fill="#2a88d8"/>
<text x="38" y="881" textLength="48" lengthAdjust="spacingAndGlyphs" style="font-size:11.500px">11516532</text>
<text x="461" y="881" class="e" textLength="99" lengthAdjust="spacingAndGlyphs" style="font-size:11.500px">2026.04.29 05:05:22</text>
<text x="591" y="881" class="e" textLength="20" lengthAdjust="spacingAndGlyphs" style="font-size:11.500px">buy</text><text x="692" y="881" class="e" textLength="22" lengthAdjust="spacingAndGlyphs" style="font-size:11.500px">0.10</text>
<text x="822" y="881" class="e" textLength="60" lengthAdjust="spacingAndGlyphs" style="font-size:11.500px">xauusd.raw</text>
<text x="967" y="881" class="e" textLength="39" lengthAdjust="spacingAndGlyphs" style="font-size:11.500px">4592.45</text><text x="1112" y="881" class="e" textLength="39" lengthAdjust="spacingAndGlyphs" style="font-size:11.500px">4590.90</text>
<text x="1257" y="881" class="e" textLength="22" lengthAdjust="spacingAndGlyphs" style="font-size:11.500px">0.00</text><text x="1402" y="881" class="e" textLength="39" lengthAdjust="spacingAndGlyphs" style="font-size:11.500px">4599.91</text>
<text x="1547" y="881" class="e" style="font-size:11.500px">-40</text><text x="1692" y="881" class="e" style="font-size:11.500px">0</text>
<text x="1892" y="881" class="e" textLength="33" lengthAdjust="spacingAndGlyphs" style="font-size:11.500px">11 904</text>
<text x="38" y="901" textLength="48" lengthAdjust="spacingAndGlyphs" style="font-size:11.500px">11516534</text>
<text x="461" y="901" class="e" textLength="99" lengthAdjust="spacingAndGlyphs" style="font-size:11.500px">2026.04.29 05:05:32</text>
<text x="591" y="901" class="e" textLength="20" lengthAdjust="spacingAndGlyphs" style="font-size:11.500px">buy</text><text x="692" y="901" class="e" textLength="22" lengthAdjust="spacingAndGlyphs" style="font-size:11.500px">0.10</text>
<text x="822" y="901" class="e" textLength="60" lengthAdjust="spacingAndGlyphs" style="font-size:11.500px">xauusd.raw</text>
<text x="967" y="901" class="e" textLength="39" lengthAdjust="spacingAndGlyphs" style="font-size:11.500px">4593.55</text><text x="1112" y="901" class="e" textLength="22" lengthAdjust="spacingAndGlyphs" style="font-size:11.500px">0.00</text>
<text x="1257" y="901" class="e" textLength="22" lengthAdjust="spacingAndGlyphs" style="font-size:11.500px">0.00</text><text x="1402" y="901" class="e" textLength="39" lengthAdjust="spacingAndGlyphs" style="font-size:11.500px">4599.91</text>
<text x="1547" y="901" class="e" style="font-size:11.500px">-40</text><text x="1692" y="901" class="e" style="font-size:11.500px">0</text>
<text x="1892" y="901" class="e" textLength="33" lengthAdjust="spacingAndGlyphs" style="font-size:11.500px">10 149</text>
<path d="M1903 874l6 7M1909 874l-6 7M1903 894l6 7M1909 894l-6 7" stroke="#999" stroke-width="1.200"/>
<rect x="20" y="910" width="10" height="14" fill="#fff" stroke="#666"/><path d="M25 913l-3 4h2v4h2v-4h2z" fill="#20a030"/>
<text x="38" y="921" textLength="542" lengthAdjust="spacingAndGlyphs" style="fill:#111;stroke:#111;stroke-width:.25">残高: 47 488 JPY  有効証拠金: 69 461  必要証拠金: 14 661  余剰証拠金: 54 800  証拠金維持率: 473.79%</text>
<text x="1892" y="921" class="e" textLength="35" lengthAdjust="spacingAndGlyphs" style="fill:#111;stroke:#111;stroke-width:.25">21 973</text>

<!-- terminal tabs -->
<path d="M62 991.500H1915" stroke="#111" stroke-width="1.300"/>
<path d="M18 991.500V1011.500H62V991.500" fill="#fff" stroke="#111" stroke-width="1.200"/>
<text x="28" y="1005" textLength="24" lengthAdjust="spacingAndGlyphs">取引</text>
<text x="72" y="1005" textLength="48" lengthAdjust="spacingAndGlyphs" class="g">運用比率</text>
<text x="141" y="1005" textLength="47" lengthAdjust="spacingAndGlyphs" class="g">口座履歴</text>
<text x="207" y="1005" textLength="35" lengthAdjust="spacingAndGlyphs" class="g">ニュース</text>
<text x="262" y="1005" textLength="58" lengthAdjust="spacingAndGlyphs" class="g">アラーム設定</text>
<text x="340" y="1005" textLength="62" lengthAdjust="spacingAndGlyphs" class="g">メールボックス</text>
<text x="404" y="1008" style="font-size:8px;fill:#d01010">7</text>
<text x="429" y="1005" textLength="43" lengthAdjust="spacingAndGlyphs" class="g">マーケット</text>
<text x="472" y="1008" style="font-size:8px;fill:#d01010">103</text>
<text x="507" y="1005" textLength="38" lengthAdjust="spacingAndGlyphs" class="g">シグナル</text>
<text x="565" y="1005" textLength="23" lengthAdjust="spacingAndGlyphs" class="g">記事</text>
<text x="608" y="1005" textLength="44" lengthAdjust="spacingAndGlyphs" class="g">ライブラリ</text>
<text x="671" y="1005" textLength="54" lengthAdjust="spacingAndGlyphs" class="g">エキスパート</text>
<text x="745" y="1005" textLength="48" lengthAdjust="spacingAndGlyphs" class="g">操作履歴</text>
<path d="M130.500 996V1009M198.500 996V1009M252.500 996V1009M330.500 996V1009M419.500 996V1009M497.500 996V1009M555.500 996V1009M598.500 996V1009M661.500 996V1009M735.500 996V1009M803.500 996V1009" stroke="#777"/>

<!-- status bar -->
<path d="M0 1016H1920" stroke="#c8c8c8" stroke-width="2"/>
<text x="3" y="1034" textLength="138" lengthAdjust="spacingAndGlyphs">F1キーでヘルプが表示されます</text>
<path d="M1210 1021V1039M1325.500 1021V1039M1427 1021V1039M1499 1021V1039M1570 1021V1039M1638 1021V1039M1706 1021V1039M1773 1021V1039" stroke="#999"/>
<text x="1215" y="1034" textLength="38" lengthAdjust="spacingAndGlyphs">Default</text>
<path d="M1778 1038V1030M1780.500 1038V1029M1783 1038V1028M1785.500 1038V1027M1788 1038V1027M1790.500 1038V1026M1793 1038V1026M1795.500 1038V1025M1798 1038V1024" stroke="#10507a" stroke-width="1.500"/>
<path d="M1778 1030V1028M1780.500 1029V1026M1783 1028V1025M1785.500 1027V1024M1788 1027V1024M1790.500 1026V1024M1793 1026V1024M1795.500 1025V1024" stroke="#8a9a10" stroke-width="1.500"/>
<text x="1806" y="1034" textLength="63" lengthAdjust="spacingAndGlyphs">17064/36 kb</text>
</svg>
</body></html>
